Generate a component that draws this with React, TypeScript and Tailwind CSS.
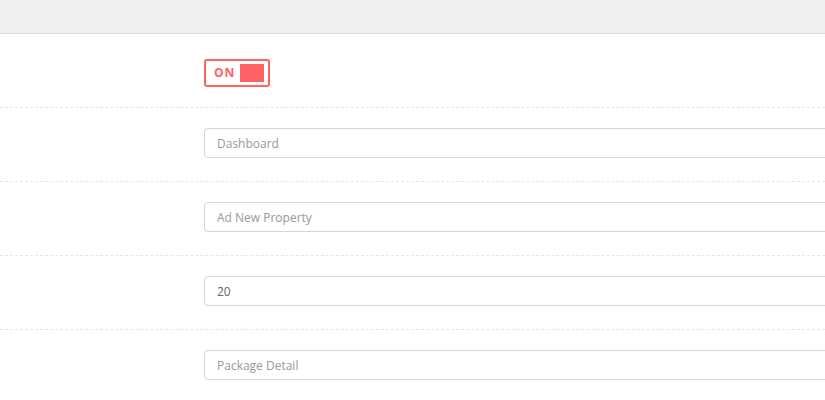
import React, { useState } from 'react';

const RED = '#ff6262';

const TextRow: React.FC<{ placeholder?: string; value?: string }> = ({ placeholder, value }) => {
    const [val, setVal] = useState(value ?? '');
    return (
        <div className="h-[74px] flex border-b border-dashed border-[#e6e6e6] pt-[20px]">
            <div className="w-[204px] shrink-0" />
            <input
                type="text"
                value={val}
                placeholder={placeholder}
                onChange={(e) => setVal(e.target.value)}
                className="w-[700px] shrink-0 h-[30px] border border-[#d4d4d4] rounded-[4px] pl-[12px] text-[12px] text-[#666] placeholder:text-[#999] outline-none bg-white"
            />
        </div>
    );
};

export default function App() {
    const [on, setOn] = useState(true);

    return (
        <div className="w-[825px] h-[400px] overflow-hidden bg-white font-['Open_Sans',sans-serif]">
            <div className="h-[34px] bg-[#f0f0f0] border-b border-[#dcdcdc]" />

            <div className="h-[74px] flex border-b border-dashed border-[#e6e6e6] pt-[25px]">
                <div className="w-[204px] shrink-0" />
                <button
                    onClick={() => setOn(!on)}
                    className="w-[66px] h-[28px] border-2 border-[#ff6262] rounded-[3px] flex items-center justify-between pl-[8px] pr-[4px] bg-white"
                >
                    <span className="text-[12px] font-bold tracking-[1px] text-[#ff6262] leading-none">ON</span>
                    <span className="w-[24px] h-[18px]" style={{ backgroundColor: on ? RED : '#ddd' }} />
                </button>
            </div>

            <TextRow placeholder="Dashboard" />
            <TextRow placeholder="Ad New Property" />
            <TextRow value="20" />
            <TextRow placeholder="Package Detail" />
        </div>
    );
}
